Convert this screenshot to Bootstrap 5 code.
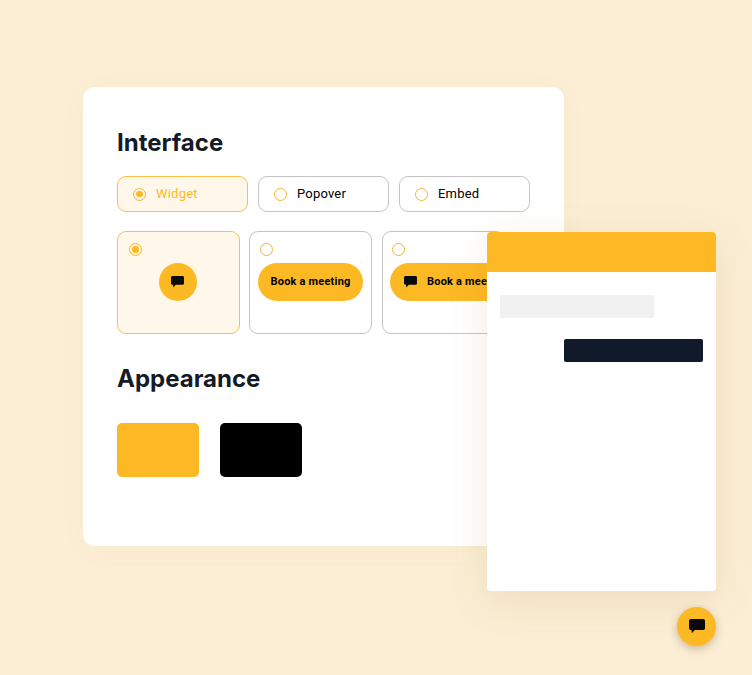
<!doctype html>
<html lang="en"><head><meta charset="utf-8"><title>Interface</title>
<link href="https://cdn.jsdelivr.net/npm/bootstrap@5.3.0/dist/css/bootstrap.min.css" rel="stylesheet">
<style>
html,body{height:675px;overflow:hidden}
body{background:#fbeed5;font-family:Roboto,sans-serif}
.stage{position:relative;width:752px;height:675px;padding:87px 0 0 83px}
.panel-main{width:481px;height:459px;background:#fff;border-radius:12px;padding:39px 34px 0;box-shadow:0 4px 24px rgba(190,150,60,.04)}
.ttl{font-family:Inter,sans-serif;font-weight:700;font-size:24px;line-height:33px;color:#141b27;margin:0}
.opt-row{gap:10px;margin-top:17px;height:36px}
.opt{width:131px;height:36px;border:1px solid #c4c4c4;border-radius:9px;padding-left:15px;gap:10px;font-size:13px;letter-spacing:.2px;color:#000;background:#fff}
.opt.on{border-color:#f9c04a;background:#fff8ea;color:#fdb924}
.dot{width:13px;height:13px;border:1.7px solid #f9b428;border-radius:50%;flex:none;background:#fff;display:flex;align-items:center;justify-content:center}
.dot.sel{background:transparent}
.dot.sel::after{content:"";width:6.500px;height:6.500px;border-radius:50%;background:#fdb924}
.tile-row{gap:9px;margin-top:19px;width:400px}
.tile{width:123px;height:103px;flex:none;border:1px solid #c4c4c4;border-radius:9px;background:#fff;padding:11px 8px 0;position:relative}
.tile.on{border-color:#f9c04a;background:#fff8ea}
.tile.third{margin-left:1px;padding-left:7px}
.tile .dot{margin-left:2px;margin-bottom:7px}
.tile.on .dot{margin-left:3px}
.fab{width:38px;height:38px;background:#fdb924;border-radius:50%;display:flex;align-items:center;justify-content:center;margin:0 auto}
.tile.on .fab{transform:translateX(-1px)}
.pill{height:38px;background:#fdb924;border-radius:19px;display:flex;align-items:center;justify-content:center;font-size:11px;font-weight:700;letter-spacing:.2px;color:#000;white-space:nowrap;width:105px}
.pill.wide{width:150px;justify-content:flex-start;padding-left:14px;gap:10px}
.ttl2{margin-top:28px}
.swatches{gap:21px;margin-top:28px}
.swatch{width:82px;height:54px;border-radius:5px}
.sw-y{background:#fdb924}
.sw-k{background:#000}
.chat{position:absolute;left:487px;top:232px;width:229px;height:359px;background:#fff;border-radius:4px;box-shadow:0 10px 40px rgba(150,110,30,.13)}
.chat-head{height:40px;background:#fdb924;border-radius:4px 4px 0 0}
.chat-body{padding:23px 13px 0}
.bub-in{width:154px;height:23px;background:#f1f1f1;border-radius:2px}
.bub-out{width:139px;height:23px;background:#111a2b;border-radius:2px;margin:21px 0 0 auto}
.fab-big{position:absolute;left:677px;top:607px;width:39px;height:39px;box-shadow:0 3px 8px rgba(120,85,20,.35)}
</style></head><body>
<div class="stage">
 <div class="panel-main">
  <h2 class="ttl">Interface</h2>
  <div class="d-flex opt-row">
   <div class="opt on d-flex align-items-center"><span class="dot sel"></span>Widget</div>
   <div class="opt d-flex align-items-center"><span class="dot"></span>Popover</div>
   <div class="opt d-flex align-items-center"><span class="dot"></span>Embed</div>
  </div>
  <div class="d-flex tile-row">
   <div class="tile on"><span class="dot sel"></span>
    <div class="fab"><svg width="13" height="12" viewBox="0 0 14 13"><path fill="#0a0a0a" d="M1.5 0h11A1.5 1.5 0 0 1 14 1.500v6.500A1.500 1.500 0 0 1 12.500 9.500H5L2.500 12.500 2.200 9.500H1.500A1.500 1.500 0 0 1 0 8V1.500A1.500 1.500 0 0 1 1.500 0z"/></svg></div></div>
   <div class="tile"><span class="dot"></span><div class="pill">Book a meeting</div></div>
   <div class="tile third"><span class="dot"></span><div class="pill wide"><svg width="13" height="12" viewBox="0 0 14 13"><path fill="#0a0a0a" d="M1.5 0h11A1.5 1.5 0 0 1 14 1.500v6.500A1.500 1.500 0 0 1 12.500 9.500H5L2.500 12.500 2.200 9.500H1.500A1.500 1.500 0 0 1 0 8V1.500A1.500 1.500 0 0 1 1.500 0z"/></svg>Book a meeting</div></div>
  </div>
  <h2 class="ttl ttl2">Appearance</h2>
  <div class="d-flex swatches"><div class="swatch sw-y"></div><div class="swatch sw-k"></div></div>
 </div>
 <div class="chat"><div class="chat-head"></div><div class="chat-body"><div class="bub-in"></div><div class="bub-out"></div></div></div>
 <div class="fab fab-big"><svg width="16" height="15" viewBox="0 0 14 13"><path fill="#0a0a0a" d="M1.5 0h11A1.5 1.5 0 0 1 14 1.500v6.500A1.500 1.500 0 0 1 12.500 9.500H5L2.500 12.500 2.200 9.500H1.500A1.500 1.500 0 0 1 0 8V1.500A1.500 1.500 0 0 1 1.500 0z"/></svg></div>
</div>
<script src="https://cdn.jsdelivr.net/npm/bootstrap@5.3.0/dist/js/bootstrap.bundle.min.js"></script>
</body></html>
